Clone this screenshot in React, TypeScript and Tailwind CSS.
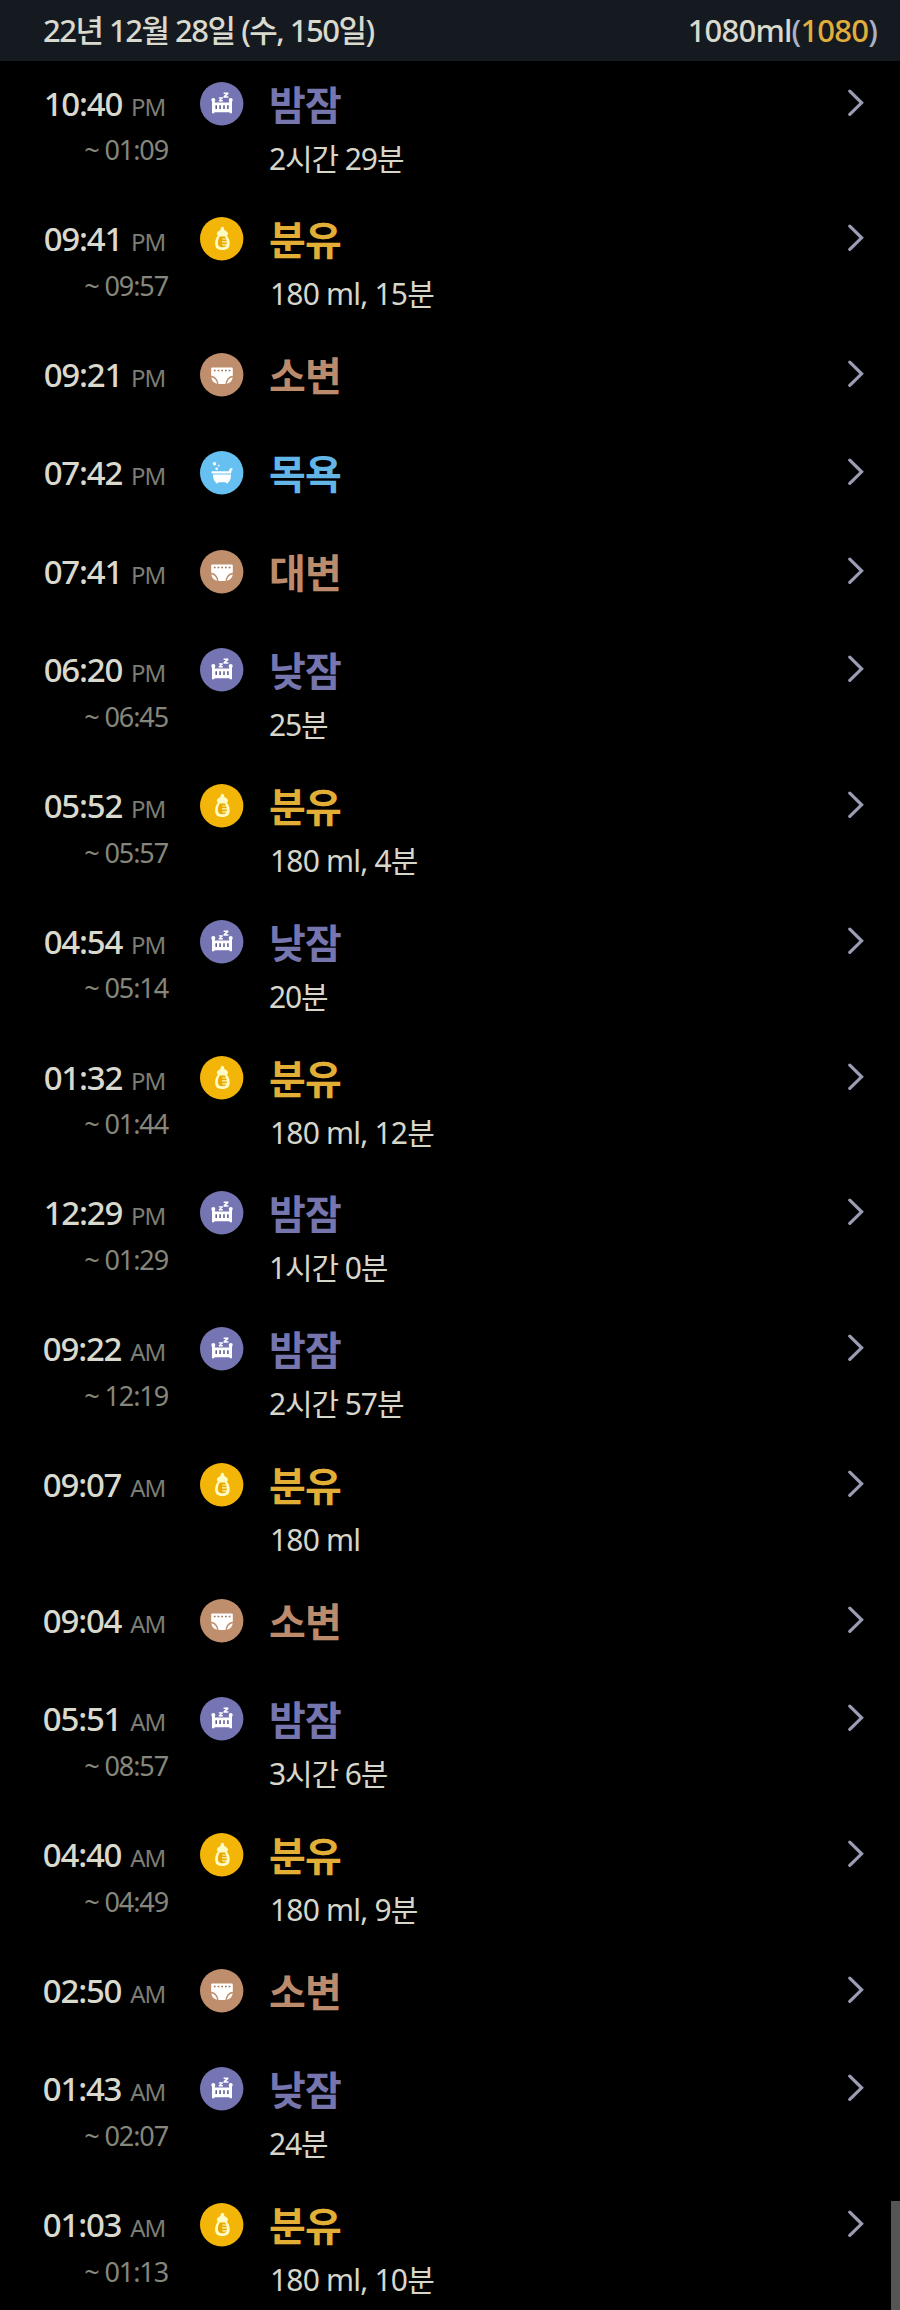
import React from "react";

type Kind = "night" | "nap" | "formula" | "pee" | "poo" | "bath";

interface Entry {
  time: string;
  period: "AM" | "PM";
  end?: string;
  kind: Kind;
  detail?: string;
}

const entries: Entry[] = [
  { time: "10:40", period: "PM", end: "01:09", kind: "night", detail: "2시간 29분" },
  { time: "09:41", period: "PM", end: "09:57", kind: "formula", detail: "180 ml, 15분" },
  { time: "09:21", period: "PM", kind: "pee" },
  { time: "07:42", period: "PM", kind: "bath" },
  { time: "07:41", period: "PM", kind: "poo" },
  { time: "06:20", period: "PM", end: "06:45", kind: "nap", detail: "25분" },
  { time: "05:52", period: "PM", end: "05:57", kind: "formula", detail: "180 ml, 4분" },
  { time: "04:54", period: "PM", end: "05:14", kind: "nap", detail: "20분" },
  { time: "01:32", period: "PM", end: "01:44", kind: "formula", detail: "180 ml, 12분" },
  { time: "12:29", period: "PM", end: "01:29", kind: "night", detail: "1시간 0분" },
  { time: "09:22", period: "AM", end: "12:19", kind: "night", detail: "2시간 57분" },
  { time: "09:07", period: "AM", kind: "formula", detail: "180 ml" },
  { time: "09:04", period: "AM", kind: "pee" },
  { time: "05:51", period: "AM", end: "08:57", kind: "night", detail: "3시간 6분" },
  { time: "04:40", period: "AM", end: "04:49", kind: "formula", detail: "180 ml, 9분" },
  { time: "02:50", period: "AM", kind: "pee" },
  { time: "01:43", period: "AM", end: "02:07", kind: "nap", detail: "24분" },
  { time: "01:03", period: "AM", end: "01:13", kind: "formula", detail: "180 ml, 10분" },
];

function CribIcon() {
  return (
    <svg viewBox="0 0 44 44" className="size-11">
      <circle cx="21.7" cy="21.7" r="21.7" fill="#7675b3" />
      <g fill="#fff">
        <circle cx="13.3" cy="18" r="2" />
        <circle cx="30.7" cy="18" r="2" />
        <path d="M12 18h2.8v2.4h14.4V18H32v13.2h-2.4v-1H14.4v1H12z" />
        <path d="M23.6 10.4h4.8v1.5l-2.4 2.3h2.4v1.6h-4.9v-1.5l2.4-2.3h-2.3zM18.8 15.2h4v1.2l-1.9 1.7h1.9v1.3h-4v-1.2l1.9-1.7h-1.9z" />
      </g>
      <path d="M16.2 23.2v3.8M20.1 23.2v3.8M24 23.2v3.8M27.9 23.2v3.8" stroke="#55558c" strokeWidth="1.5" />
    </svg>
  );
}

function BottleIcon() {
  return (
    <svg viewBox="0 0 44 44" className="size-11">
      <circle cx="21.7" cy="21.7" r="21.7" fill="#f2b508" />
      <path
        d="M22.4 9.7c1 0 1.6.8 1.7 2 .1 1 .6 1.5 1.6 2.1 1.5.9 2.2 1.7 2.2 2.8v.9l-1.1.9c1.9 2 2.9 5.1 2.9 8.1 0 4.4-2.3 6.5-7.3 6.5s-7.3-2.1-7.3-6.5c0-3 1-6.1 2.9-8.1l-1.1-.9v-.9c0-1.1.7-1.9 2.2-2.8 1-.6 1.5-1.1 1.6-2.1.1-1.2.7-2 1.7-2z"
        fill="#fffbc4"
      />
      <path
        d="M19.9 19.600h5c1.300 1.600 2 4.200 2 6.500 0 2.900-1.500 4.200-4.500 4.200s-4.500-1.300-4.500-4.200c0-2.300.7-4.900 2-6.500z"
        fill="#e8a900"
      />
      <path d="M22.4 22h4.8M22.100 24.900h5.500M22.400 27.800h5.200" stroke="#fffbc4" strokeWidth="1.2" />
    </svg>
  );
}

function DiaperIcon() {
  return (
    <svg viewBox="0 0 44 44" className="size-11">
      <circle cx="21.7" cy="21.7" r="21.7" fill="#bf8e6c" />
      <path d="M11.2 15.4q0-1 1-1h19.600q1 0 1 1v7.400c-4.200.6-6.600 3.500-7.300 8.200h-7c-.7-4.700-3.100-7.600-7.300-8.200z" fill="#fff" />
      <path
        d="M11.300 24.200c3 .6 5 2.600 5.900 6.400-3-.4-5.200-2.200-5.900-6.400zM32.700 24.200c-3 .6-5 2.600-5.900 6.400 3-.4 5.200-2.200 5.900-6.400z"
        fill="#fff"
      />
      <path d="M13.900 17.500h17" stroke="#a07252" strokeWidth="1.4" strokeDasharray="1.7 2" />
    </svg>
  );
}

function BathIcon() {
  return (
    <svg viewBox="0 0 44 44" className="size-11">
      <circle cx="21.7" cy="21.7" r="21.7" fill="#66c1f2" />
      <g fill="#fff">
        <circle cx="14.5" cy="12.7" r="1.8" />
        <circle cx="18.7" cy="14.6" r=".9" />
        <circle cx="16.7" cy="17.8" r="1.3" />
        <path d="M12.400 20.300h16.300c.9-2.700 1.900-3.600 3.400-3.200l.6 1.400c-.9.300-1.200 1.300-1.600 3.900H12.400a1 1 0 0 1 0-2.100z" />
        <path d="M13 23.400h18c-.1 4.700-1 7-2.800 7.600v1.300h-2.300v-1h-7.800v1h-2.300V31c-1.800-.6-2.700-2.900-2.800-7.600z" />
      </g>
    </svg>
  );
}

const kinds: Record<Kind, { label: string; color: string; icon: React.ReactNode }> = {
  night: { label: "밤잠", color: "text-[#7675ae]", icon: <CribIcon /> },
  nap: { label: "낮잠", color: "text-[#7675ae]", icon: <CribIcon /> },
  formula: { label: "분유", color: "text-[#e3ae35]", icon: <BottleIcon /> },
  pee: { label: "소변", color: "text-[#bc8b6c]", icon: <DiaperIcon /> },
  poo: { label: "대변", color: "text-[#bc8b6c]", icon: <DiaperIcon /> },
  bath: { label: "목욕", color: "text-[#62b5e5]", icon: <BathIcon /> },
};

function EntryRow({ entry }: { entry: Entry }) {
  const { label, color, icon } = kinds[entry.kind];

  return (
    <li className={entry.detail ? "flex h-[135.8px] items-start" : "flex h-[98.4px] items-start"}>
      {/* Time */}
      <div className="w-[168px] shrink-0">
        <div className="flex h-11 items-baseline justify-end pr-[3px] leading-[44px]">
          <span className="text-[33px] font-medium tracking-[-1.2px] text-[#d9d9ce]">{entry.time}</span>
          <span className="ml-[9px] text-[24px] tracking-[-1.2px] text-[#7c7d74]">{entry.period}</span>
        </div>
        {entry.end && (
          <div className="mt-[2.5px] text-right text-[27px] leading-[44px] tracking-[-1.1px] text-[#85867c]">~ {entry.end}</div>
        )}
      </div>

      <div className="ml-8 shrink-0">{icon}</div>

      {/* Activity */}
      <div className="ml-[25px] flex-1 whitespace-nowrap">
        <div className={`h-11 text-[40px] leading-[46px] font-bold tracking-[-0.8px] ${color}`}>{label}</div>
        {entry.detail && (
          <div
            className={
              entry.kind === "formula"
                ? "mt-[11px] pl-px text-[30px] leading-[44px] tracking-[-0.8px] text-[#d6d6cb]"
                : "mt-[11px] text-[30px] leading-[44px] tracking-[-1.1px] text-[#d6d6cb]"
            }
          >
            {entry.detail}
          </div>
        )}
      </div>

      <svg
        viewBox="0 0 16 28"
        className="mt-[7px] mr-[36px] h-7 w-4 shrink-0"
        fill="none"
        stroke="#9a9db3"
        strokeWidth="3.2"
        strokeLinecap="round"
      >
        <path d="M1.8 2.2 13.6 13.8 1.8 25.4" />
      </svg>
    </li>
  );
}

export default function App() {
  return (
    <div className="relative h-[2310px] w-[900px] overflow-hidden bg-black font-['Noto_Sans','Noto_Sans_CJK_KR',sans-serif]">
      <header className="flex h-[61px] items-center justify-between bg-[#151a20] pr-[23px] pb-px pl-[43px] text-[31px] leading-[60px] font-medium whitespace-nowrap text-[#d9d9ce]">
        <h1 className="tracking-[-1.5px]">22년 12월 28일 (수, 150일)</h1>
        <p className="tracking-[-0.8px]">
          1080ml<span className="text-[#a9b2c6]">(</span>
          <span className="text-[#e0ae3c]">1080</span>
          <span className="text-[#a9b2c6]">)</span>
        </p>
      </header>

      <ul className="pt-[20.5px]">
        {entries.map((entry) => (
          <EntryRow key={entry.time + entry.period} entry={entry} />
        ))}
      </ul>

      {/* Scroll thumb */}
      <div className="absolute right-0 bottom-0 h-[109px] w-[9px] bg-[#555]" />
    </div>
  );
}
